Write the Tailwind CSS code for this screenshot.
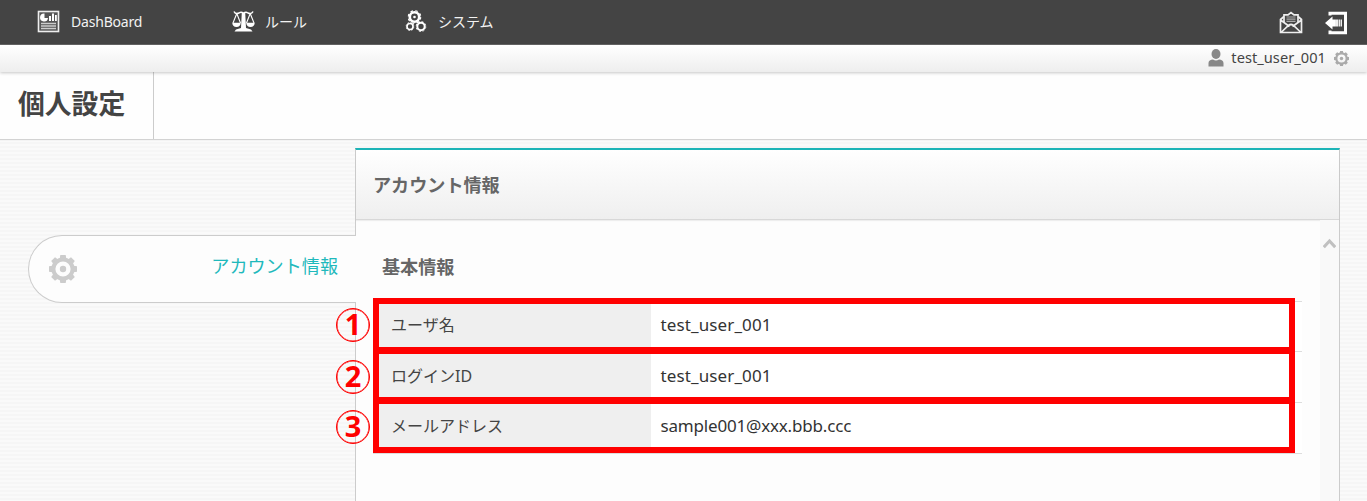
<!DOCTYPE html>
<html lang="ja">
<head>
<meta charset="utf-8">
<title>個人設定</title>
<script src="https://cdn.jsdelivr.net/npm/@tailwindcss/browser@4"></script>
</head>
<body class="w-[1367px] h-[501px] overflow-hidden flex flex-col font-['Noto_Sans','Noto_Sans_CJK_JP',sans-serif] bg-[repeating-linear-gradient(180deg,#fafafa_0px,#fafafa_2px,#f6f6f6_2px,#f6f6f6_4px)]">
<svg class="hidden">
  <symbol id="gear" viewBox="0 0 28 28">
    <g fill="currentColor">
      <g id="teeth"><path d="M11.300 0h5.400l.8 5h-7zM11.300 28h5.400l.8-5h-7zM0 11.300v5.400l5 .8v-7zM28 11.300v5.400l-5 .8v-7z"/></g>
      <use href="#teeth" transform="rotate(45 14 14)"/>
      <circle cx="14" cy="14" r="3.2"/>
    </g>
    <circle cx="14" cy="14" r="9.600" fill="none" stroke="currentColor" stroke-width="4"/>
  </symbol>
  <symbol id="cog" viewBox="0 0 14 14">
    <circle cx="7" cy="7" r="4.700" fill="none" stroke="currentColor" stroke-width="2.600"/>
    <circle cx="7" cy="7" r="6.300" fill="none" stroke="currentColor" stroke-width="1.200" stroke-dasharray="2.600 2.350"/>
  </symbol>
</svg>

<nav class="h-[45px] shrink-0 bg-[#444] border-b border-[#666] flex items-center text-[14px] text-[#f2f2f2]">
  <div class="flex items-center pl-[37px] w-[232px] -mt-[2px]">
    <svg class="size-[23px]" viewBox="0 0 23 23"><rect x="1.500" y="1.500" width="20" height="20" fill="#555" stroke="#eee" stroke-width="1.600"/><path d="M7.500 3.500v4.500h3.500a4 4 0 1 1-4-4.500zM12 6h2v5h-2zM15 3.500h2v7.500h-2zM18 5h1.800v6h-1.800z" fill="#fff"/><path d="M4 13.500h15M4 16h15M4 18.500h15" stroke="#ccc" stroke-width="1.300"/></svg>
    <span class="ml-[11px] tracking-[-0.200px]">DashBoard</span>
  </div>
  <div class="flex items-center w-[173px] -mt-[2px]">
    <svg class="w-[23px] h-[22px]" viewBox="0 0 23 22" fill="none" stroke="#fff"><path d="M2 1.500c1 2 3 2.500 5 1.500 1.500-1 3-1 4.500.5 1.500-1.500 3-1.500 4.500-.5 2 1 4 .5 5-1.500" stroke-width="1.500"/><path d="M4.800 3.500 1 13M4.800 3.500 8.500 13M18.200 3.500 14.500 13M18.200 3.500 22 13" stroke-width="1.100"/><path d="M.3 12.800h8.400c0 2.500-1.500 4.200-4.200 4.200S.3 15.300.3 12.800zM14.300 12.800h8.400c0 2.500-1.500 4.200-4.200 4.200s-4.200-1.700-4.200-4.200z" fill="#fff" stroke="none"/><path d="M9.800 2.500h3.400l.8 15.500 5 1.500 1.500 2H2.500l1.500-2 5-1.500z" fill="#fff" stroke="none"/></svg>
    <span class="ml-[10px]">ルール</span>
  </div>
  <div class="flex items-center flex-1 -mt-[2px]">
    <svg class="w-[22px] h-[22px] text-white" viewBox="0 0 22 22"><use href="#cog" x="2.500" y="0" width="14" height="14"/><circle cx="9.500" cy="7" r="1.300" fill="currentColor"/><use href="#cog" x="0.500" y="12" width="9" height="9"/><use href="#cog" x="10.500" y="11" width="11" height="11"/></svg>
    <span class="ml-[11px]">システム</span>
  </div>
  <svg class="w-[24px] h-[24px] mt-[2px]" viewBox="0 0 24 24" fill="none" stroke="#eee" stroke-width="1.700"><path d="M5 5.500 1.500 8.500v13h21v-13L19 5.500M1.500 9l9 6.500M22.500 9l-9 6.500M2 21.500l7.500-7q2.500-2 5 0l7.500 7"/><path d="M5 11V3.800h4l3-2.300 3 2.300h4V11"/><path d="M7.500 6h9M7.500 8.200h9M7.500 10.400h9" stroke="#aaa" stroke-width="1.200"/></svg>
  <svg class="w-[24px] h-[24px] ml-[22px] mr-[18px] mt-[2px]" viewBox="0 0 24 24"><path d="M5 4.500V2.300h15.500v19.400H5v-2.200" fill="none" stroke="#fff" stroke-width="3"/><path d="M0 12 7.500 5.500V8.500h2.500v7H7.500v3z" fill="#fff"/><path d="M10 8.500h3v7h-3zM13.500 8.500h1.700v7h-1.700zM15.700 8.500h1.300v7h-1.300z" fill="#eee"/></svg>
</nav>

<div class="relative h-[27px] shrink-0 bg-linear-to-b from-white to-[#eee] shadow-[0_1px_3px_rgba(0,0,0,0.22)] flex items-center justify-end pr-[18px] text-[14.600px] text-[#444]">
  <svg class="w-[16px] h-[18px] mr-[7px] -mt-[2px]" viewBox="0 0 16 18" fill="#888"><ellipse cx="8" cy="5" rx="4.500" ry="5"/><path d="M.5 17.500v-3.500c0-2 2-3.500 4.500-3.500q3 2 6 0c2.500 0 4.500 1.500 4.500 3.500v3.500z"/></svg>
  <span class="-mt-[1px] tracking-[0.050px]">test_user_001</span>
  <svg class="size-[15px] ml-[8px] text-[#aaa]"><use href="#gear"/></svg>
</div>

<header class="h-[67px] shrink-0 bg-[#fefefe] shadow-[0_1px_1px_rgba(0,0,0,0.14)] flex">
  <h1 class="w-[154px] border-r border-[#ccc] pl-[18px] pb-[2px] flex items-center text-[26.800px] font-bold text-[#444] whitespace-nowrap">個人設定</h1>
</header>

<main class="flex flex-1 pt-[9px]">
  <aside class="w-[355px] pt-[87px] pl-[28px]">
    <div class="relative z-10 w-[328px] h-[68px] bg-[#fdfdfd] border border-r-0 border-[#ccc] rounded-l-[34px] flex items-center justify-between pl-[20px] pr-[18px]">
      <svg class="size-[28px] text-[#ccc]"><use href="#gear"/></svg>
      <span class="text-[18.100px] text-[#1fb9bc] whitespace-nowrap pb-[4px]">アカウント情報</span>
    </div>
  </aside>
  <section class="w-[985px] h-[353px] bg-[#fdfdfd] border-x border-[#ccc] border-t-2 border-t-[#1cb4b7] flex flex-col">
    <h2 class="h-[70px] shrink-0 bg-linear-to-b from-white to-[#efefef] border-b border-[#d8d8d8] shadow-[0_1px_1px_rgba(0,0,0,0.06)] pl-[17px] pt-[2px] flex items-center text-[18.100px] font-bold text-[#666]">アカウント情報</h2>
    <div class="flex flex-1">
      <div class="w-[964px] pl-[17px] pt-[31px]">
        <h3 class="pl-[9px] h-[50px] leading-[32px] text-[18.100px] font-bold text-[#666]">基本情報</h3>
        <div class="relative w-[929px] bg-white border-b border-[#ddd] text-[16px] text-[#444]">
          <div class="flex h-[50px] border-t border-[#ddd]"><div class="w-[278px] bg-[#efefef] pl-[18px] leading-[46px]">ユーザ名</div><div class="pl-[9.500px] leading-[46px] text-[17px] tracking-[0.120px] text-[#333]">test_user_001</div></div>
          <div class="flex h-[51px] border-t border-[#ddd]"><div class="w-[278px] bg-[#efefef] pl-[18px] leading-[49px]">ログインID</div><div class="pl-[9.500px] leading-[48px] text-[17px] tracking-[0.120px] text-[#333]">test_user_001</div></div>
          <div class="flex h-[51px] border-t border-[#ddd]"><div class="w-[278px] bg-[#efefef] pl-[18px] leading-[47px]">メールアドレス</div><div class="pl-[9.500px] leading-[46px] text-[17px] tracking-[-0.180px] text-[#333]">sample001@xxx.bbb.ccc</div></div>
          <div class="absolute left-0 -top-[3px] w-[922px] h-[155px] border-6 border-[red] flex flex-col">
            <div class="h-[43px]"></div><div class="h-[7px] bg-[red]"></div><div class="h-[43px]"></div><div class="h-[7px] bg-[red]"></div>
          </div>
          <div class="absolute -left-[37px] top-[7px] z-20 flex flex-col text-[red] text-[29px] font-bold leading-none">
            <div class="size-[34px] rounded-full border border-[red] shadow-[inset_0_0_0_0.5px_red] flex items-center justify-center pb-[3px] mb-[18px]">1</div>
            <div class="size-[34px] rounded-full border border-[red] shadow-[inset_0_0_0_0.5px_red] flex items-center justify-center pb-[3px] mb-[16px]">2</div>
            <div class="size-[34px] rounded-full border border-[red] shadow-[inset_0_0_0_0.5px_red] flex items-center justify-center pb-[3px]">3</div>
          </div>
        </div>
      </div>
      <div class="flex-1 bg-[#f9f9f9] pt-[18px] pl-[3px]">
        <svg class="w-[13px] h-[11px]" viewBox="0 0 13 11" fill="none" stroke="#c0c0c0" stroke-width="3"><path d="M.8 9.200 6.500 3l5.700 6.200"/></svg>
      </div>
    </div>
  </section>
</main>
</body>
</html>
